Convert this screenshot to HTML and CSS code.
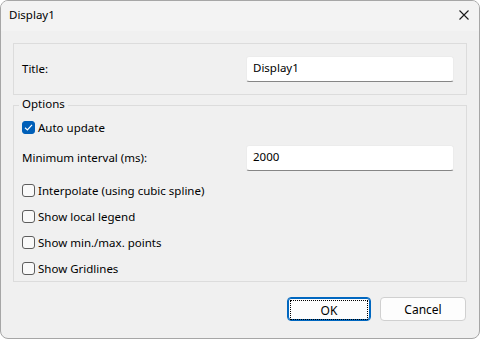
FILE: index.html
```html
<!doctype html>
<html lang="en">
    <head>
        <title>Display1</title>
        <link rel="stylesheet" href="styles.css">
    </head>
    <body>
        <div class="window">
            <div class="titlebar">
                <span class="caption">Display1</span>
                <svg class="close" width="10" height="10" viewBox="0 0 10 10">
                    <path d="M0.5 0.5 L9.5 9.5 M9.5 0.5 L0.5 9.5" stroke="#1a1a1a" stroke-width="1.1" fill="none"/>
                </svg>
            </div>
            <div class="content">
                <div class="group group--title">
                    <div class="row">
                        <label>Title:</label>
                        <div class="textbox">Display1</div>
                    </div>
                </div>
                <div class="group group--options">
                    <span class="legend">Options</span>
                    <div class="check check--first">
                        <span class="box box--checked">
                            <svg width="9" height="9" viewBox="0 0 9 9"><path d="M1 4.8 L3.4 7 L8 1.8" stroke="#fff" stroke-width="1.2" fill="none"/></svg>
                        </span>
                        <span>Auto update</span>
                    </div>
                    <div class="row row--interval">
                        <label>Minimum interval (ms):</label>
                        <div class="textbox">2000</div>
                    </div>
                    <div class="check"><span class="box"></span><span>Interpolate (using cubic spline)</span></div>
                    <div class="check"><span class="box"></span><span>Show local legend</span></div>
                    <div class="check"><span class="box"></span><span>Show min./max. points</span></div>
                    <div class="check"><span class="box"></span><span>Show Gridlines</span></div>
                </div>
                <div class="buttons">
                    <button class="btn btn--default"><span class="focus">OK</span></button>
                    <button class="btn btn--cancel">Cancel</button>
                </div>
            </div>
        </div>
    </body>
</html>
```

FILE: styles.css
```css
body {
    margin: 0;
    background: #ffffff;
    font-family: "Noto Sans", "Segoe UI", sans-serif;
    font-size: 11.5px;
    color: #000;
}
.window {
    box-sizing: border-box;
    width: 480px;
    height: 339px;
    border: 1px solid #a6a6a6;
    border-radius: 8px;
    background: #f0f0f0;
    overflow: hidden;
}
.titlebar {
    height: 30px;
    background: #f3f3f3;
    display: flex;
    align-items: center;
    justify-content: space-between;
    padding: 0 10px 0 8px;
}
.caption {
    margin-top: -3px;
}
.close {
    margin-top: -2px;
}
.content {
    padding: 12px 12px 0 12px;
}
.group {
    box-sizing: border-box;
    border: 1px solid #dcdcdc;
    position: relative;
}
.group--title {
    height: 52px;
    padding: 12px 12px 0 8px;
}
.row {
    display: flex;
    align-items: center;
    justify-content: space-between;
    height: 26px;
}
.row label {
    margin-top: -1px;
}
.textbox {
    box-sizing: border-box;
    width: 208px;
    height: 26px;
    background: #fff;
    border: 1px solid #ececec;
    border-bottom: 1px solid #868686;
    border-radius: 3px;
    padding: 3px 0 0 6px;
}
.group--options {
    margin-top: 10px;
    height: 177px;
    padding: 15px 12px 0 8px;
}
.legend {
    position: absolute;
    top: -10px;
    left: 5px;
    padding: 0 3px;
    background: #f0f0f0;
}
.check {
    display: flex;
    align-items: center;
    gap: 3px;
    height: 13px;
    margin-top: 13px;
}
.check--first {
    margin-top: 0;
}
.row--interval {
    margin-top: 11px;
}
.box {
    box-sizing: border-box;
    width: 13px;
    height: 13px;
    border: 1px solid #5d5d5d;
    border-radius: 3px;
    background: #f9f9f9;
    display: flex;
    align-items: center;
    justify-content: center;
    flex: none;
}
.box--checked {
    background: #005fb8;
    border-color: #005fb8;
}
.buttons {
    display: flex;
    justify-content: flex-end;
    gap: 9px;
    margin-top: 15px;
    padding-right: 1px;
}
.btn {
    box-sizing: border-box;
    height: 24px;
    font-family: inherit;
    font-size: 12px;
    border-radius: 4px;
    background: #fdfdfd;
    padding: 0;
}
.btn--default {
    width: 84px;
    border: 1px solid #0067c0;
    box-shadow: inset 0 0 0 1px #0067c0;
    padding: 2px;
}
.focus {
    display: flex;
    align-items: center;
    justify-content: center;
    height: 100%;
    border: 1px dotted #000;
}
.btn--cancel {
    width: 86px;
    border: 1px solid #d0d0d0;
}
```
